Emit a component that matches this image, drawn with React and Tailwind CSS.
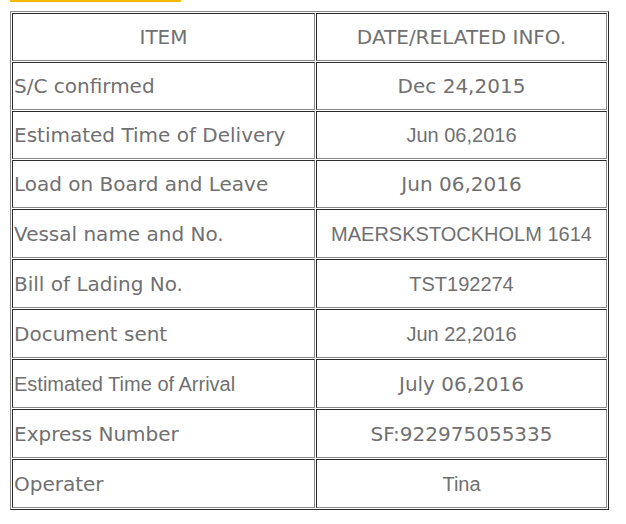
const verdana = "font-['DejaVu_Sans',Verdana,sans-serif]";
const arial = "font-['Liberation_Sans',Arial,sans-serif]";

const rows = [
  { item: "S/C confirmed", info: "Dec 24,2015", h: "h-[48px]" },
  { item: "Estimated Time of Delivery", info: "Jun 06,2016", infoArial: true, h: "h-[48px]" },
  { item: "Load on Board and Leave", info: "Jun 06,2016", h: "h-[48px]" },
  { item: "Vessal name and No.", info: "MAERSKSTOCKHOLM 1614", infoArial: true, h: "h-[49px]" },
  { item: "Bill of Lading No.", info: "TST192274", infoArial: true, h: "h-[49px]" },
  { item: "Document sent", info: "Jun 22,2016", infoArial: true, h: "h-[49px]" },
  { item: "Estimated Time of Arrival", itemArial: true, info: "July 06,2016", h: "h-[49px]" },
  { item: "Express Number", info: "SF:922975055335", h: "h-[49px]" },
  { item: "Operater", info: "Tina", infoArial: true, h: "h-[49px]" },
];

const cell = "p-0 align-middle border border-t-[#2b2b2b] border-l-[#2b2b2b] border-b-[#8a8a8a] border-r-[#8a8a8a]";

export default function App() {
  return (
    <div className="bg-white w-[626px] h-[524px] pl-[10px] text-[#707070] text-[20px] leading-normal">
      <div className="w-[171px] h-[2px] bg-[#fdb900]"></div>
      <table className="mt-[9px] w-[599px] table-fixed border-separate border-spacing-[1px] border border-t-[#8a8a8a] border-l-[#8a8a8a] border-b-[#2b2b2b] border-r-[#2b2b2b]">
        <tbody>
          <tr>
            <td className={`${cell} ${verdana} w-[303px] h-[48px] text-center`}>ITEM</td>
            <td className={`${cell} ${verdana} w-[291px] text-center`}>DATE/RELATED INFO.</td>
          </tr>
          {rows.map((r, i) => (
            <tr key={i}>
              <td className={`${cell} ${r.h} pl-px whitespace-nowrap ${r.itemArial ? arial : verdana}`}>{r.item}</td>
              <td className={`${cell} text-center whitespace-nowrap ${r.infoArial ? arial : verdana}`}>{r.info}</td>
            </tr>
          ))}
        </tbody>
      </table>
    </div>
  );
}
